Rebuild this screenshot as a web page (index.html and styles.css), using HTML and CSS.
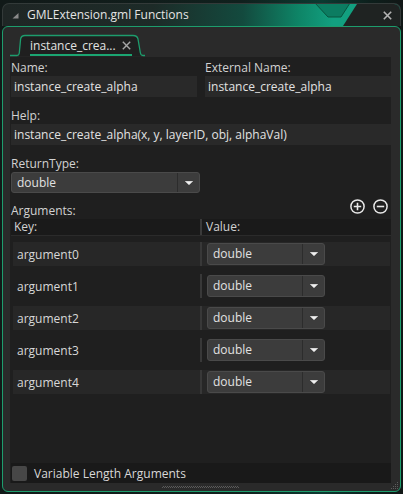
FILE: index.html
```html
<!DOCTYPE html>
<html>
<head>
<meta charset="utf-8">
<link rel="stylesheet" href="styles.css">
</head>
<body>
<div class="window">
  <div class="titlebar">
    <svg class="tb-deco" viewBox="0 0 397 22" width="397" height="22">
      <polygon points="312,-1 347,-1 338,13 325,13" fill="#0c7c61" stroke="#08543f" stroke-width="1"/>
      <polygon points="354,0 397,0 397,22 340,22" fill="#1f2322"/>
    </svg>
    <svg class="collapse" viewBox="0 0 7 6" width="7" height="6"><polygon points="6.5,0 6.5,5.5 0.5,5.5" fill="#8a8a8a"/></svg>
    <span class="title">GMLExtension.gml Functions</span>
    <svg class="close" viewBox="0 0 9 9" width="9" height="9"><path d="M0.8 0.8L8.2 8.2M8.2 0.8L0.8 8.2" stroke="#b4b4b4" stroke-width="1.6"/></svg>
  </div>
  <div class="frame">
    <div class="tabstrip">
      <svg class="tab-outline" viewBox="0 0 381 30" width="381" height="30">
        <path d="M9 29.5 L9.3 26 L10.6 12 C11 9.5 12.5 8.5 15 8.5 H123 C126 8.5 127.5 9.5 128 12 L130.4 26 L130.8 29.5 Z" fill="#1f1f1f"/>
        <path d="M0 28.5 H7 C8.6 28.5 9 27.6 9.3 26 L10.6 12 C11 9.5 12.5 8.5 15 8.5 H123 C126 8.5 127.5 9.5 128 12 L130.4 26 C130.7 27.8 131.4 28.5 133 28.5 H135" fill="none" stroke="#1d9d6d" stroke-width="1.3"/>
      </svg>
      <div class="tab">
        <span class="tab-text">instance_crea...</span>
        <svg class="tab-close" viewBox="0 0 9 9" width="9" height="9"><path d="M0.8 0.8L8.2 8.2M8.2 0.8L0.8 8.2" stroke="#a6a6a6" stroke-width="1.4"/></svg>
      </div>
    </div>
    <div class="panel">
      <div class="row2">
        <div class="field">
          <div class="label">Name:</div>
          <div class="input">instance_create_alpha</div>
        </div>
        <div class="field">
          <div class="label">External Name:</div>
          <div class="input">instance_create_alpha</div>
        </div>
      </div>
      <div class="field help">
        <div class="label">Help:</div>
        <div class="input">instance_create_alpha(x, y, layerID, obj, alphaVal)</div>
      </div>
      <div class="field rtype">
        <div class="label">ReturnType:</div>
        <div class="select rt">
          <div class="sel-val">double</div>
          <div class="sel-btn"><svg viewBox="0 0 8 4" width="8" height="4"><polygon points="0.3,0.3 7.7,0.3 4,3.8" fill="#f0f0f0" stroke="#f0f0f0" stroke-width="0.5" stroke-linejoin="round"/></svg></div>
        </div>
      </div>
      <div class="args-head">
        <span class="label">Arguments:</span>
        <div class="icons">
          <svg viewBox="0 0 15 15" width="15" height="15"><circle cx="7.5" cy="7.5" r="6.6" fill="none" stroke="#e8e8e8" stroke-width="1.5"/><path d="M3.8 7.5H11.2M7.5 3.8V11.2" stroke="#e8e8e8" stroke-width="1.6"/></svg>
          <svg viewBox="0 0 15 15" width="15" height="15"><circle cx="7.5" cy="7.5" r="6.6" fill="none" stroke="#e8e8e8" stroke-width="1.5"/><path d="M3.8 7.5H11.2" stroke="#e8e8e8" stroke-width="1.6"/></svg>
        </div>
      </div>
      <div class="table">
        <div class="thead">
          <div class="th key">Key:</div>
          <div class="th-sep"></div>
          <div class="th val">Value:</div>
        </div>
        <div class="tbody">
          <div class="trow lit">
            <div class="tkey">argument0</div><div class="tsep"></div>
            <div class="tval"><div class="select small"><div class="sel-val">double</div><div class="sel-btn"><svg viewBox="0 0 8 4" width="8" height="4"><polygon points="0.3,0.3 7.7,0.3 4,3.8" fill="#f0f0f0" stroke="#f0f0f0" stroke-width="0.5" stroke-linejoin="round"/></svg></div></div></div>
          </div>
          <div class="trow">
            <div class="tkey">argument1</div><div class="tsep"></div>
            <div class="tval"><div class="select small"><div class="sel-val">double</div><div class="sel-btn"><svg viewBox="0 0 8 4" width="8" height="4"><polygon points="0.3,0.3 7.7,0.3 4,3.8" fill="#f0f0f0" stroke="#f0f0f0" stroke-width="0.5" stroke-linejoin="round"/></svg></div></div></div>
          </div>
          <div class="trow lit">
            <div class="tkey">argument2</div><div class="tsep"></div>
            <div class="tval"><div class="select small"><div class="sel-val">double</div><div class="sel-btn"><svg viewBox="0 0 8 4" width="8" height="4"><polygon points="0.3,0.3 7.7,0.3 4,3.8" fill="#f0f0f0" stroke="#f0f0f0" stroke-width="0.5" stroke-linejoin="round"/></svg></div></div></div>
          </div>
          <div class="trow">
            <div class="tkey">argument3</div><div class="tsep"></div>
            <div class="tval"><div class="select small"><div class="sel-val">double</div><div class="sel-btn"><svg viewBox="0 0 8 4" width="8" height="4"><polygon points="0.3,0.3 7.7,0.3 4,3.8" fill="#f0f0f0" stroke="#f0f0f0" stroke-width="0.5" stroke-linejoin="round"/></svg></div></div></div>
          </div>
          <div class="trow lit">
            <div class="tkey">argument4</div><div class="tsep"></div>
            <div class="tval"><div class="select small"><div class="sel-val">double</div><div class="sel-btn"><svg viewBox="0 0 8 4" width="8" height="4"><polygon points="0.3,0.3 7.7,0.3 4,3.8" fill="#f0f0f0" stroke="#f0f0f0" stroke-width="0.5" stroke-linejoin="round"/></svg></div></div></div>
          </div>
        </div>
      </div>
      <div class="footer">
        <span class="checkbox"></span>
        <span class="footer-text">Variable Length Arguments</span>
      </div>
    </div>
    <div class="strip"><div class="grip"></div></div>
    <svg class="corner-grip" viewBox="0 0 8 8" width="8" height="8">
      <g fill="#5c5c5c">
        <rect x="6" y="0" width="1" height="1"/>
        <rect x="4" y="2" width="1" height="1"/><rect x="6" y="2" width="1" height="1"/>
        <rect x="2" y="4" width="1" height="1"/><rect x="4" y="4" width="1" height="1"/><rect x="6" y="4" width="1" height="1"/>
        <rect x="0" y="6" width="1" height="1"/><rect x="2" y="6" width="1" height="1"/><rect x="4" y="6" width="1" height="1"/><rect x="6" y="6" width="1" height="1"/>
      </g>
    </svg>
  </div>
</div>
</body>
</html>
```

FILE: styles.css
```css
html, body {
  margin: 0;
  padding: 0;
}
body {
  width: 403px;
  height: 494px;
  overflow: hidden;
  background: linear-gradient(90deg, #111918 0%, #10201d 60%, #0b3a31 80%, #0d1f1c 92%, #111716 100%);
  font-family: "Open Sans", "DejaVu Sans", sans-serif;
  font-size: 12px;
  color: #dcdcdc;
}
.window {
  margin: 3px 0 0 2px;
  width: 399px;
}
.titlebar {
  position: relative;
  height: 23px;
  box-sizing: border-box;
  border: 1px solid #333a39;
  border-bottom: 0;
  border-radius: 7px 7px 0 0;
  overflow: hidden;
  background: linear-gradient(90deg, #1f2625 0px, #1d2b28 150px, #134a3e 240px, #0e8466 295px, #12a080 330px);
  display: flex;
  align-items: center;
  padding: 0 8px 0 9px;
}
.tb-deco {
  position: absolute;
  left: 0;
  top: 0;
}
.collapse, .title, .close {
  position: relative;
}
.collapse {
  margin-right: 8px;
  margin-top: 1px;
}
.title {
  color: #e4e4e4;
  line-height: 17px;
  margin-top: -1px;
}
.close {
  margin-left: auto;
}
.frame {
  position: relative;
  height: 466px;
  box-sizing: border-box;
  border: 1px solid #1d9d6d;
  border-radius: 6px;
  background: #2a2a2a;
  padding: 0 9px 0 7px;
}
.tabstrip {
  position: relative;
  height: 30px;
  display: flex;
  align-items: flex-end;
}
.tab-outline {
  position: absolute;
  left: 0;
  top: 0;
}
.tab {
  position: relative;
  margin: 0 0 1px 20px;
  width: 102px;
  height: 20px;
  box-sizing: border-box;
  padding-top: 1px;
  border-bottom: 2px solid #1ba571;
  display: flex;
  align-items: center;
  gap: 6px;
}
.tab-text {
  color: #e2e2e2;
  line-height: 17px;
  white-space: nowrap;
}
.panel {
  height: 426px;
  box-sizing: border-box;
  background: #1f1f1f;
  padding: 2px 0 0 1px;
  display: flex;
  flex-direction: column;
}
.row2 {
  display: flex;
  gap: 8px;
  margin-bottom: 10px;
}
.row2 .field {
  flex: 1;
  min-width: 0;
}
.field.help {
  margin-bottom: 10px;
}
.field.rtype {
  margin-bottom: 9px;
}
.label {
  height: 17px;
  line-height: 17px;
  color: #d2d2d2;
}
.input {
  height: 21px;
  line-height: 21px;
  background: #292929;
  padding-left: 3px;
  color: #e2e2e2;
  white-space: nowrap;
  overflow: hidden;
}
.select {
  display: flex;
  height: 21px;
  box-sizing: border-box;
  border: 1px solid #4a4a4a;
  border-radius: 3px;
  background: #3c3c3c;
  overflow: hidden;
}
.select.rt {
  width: 189px;
}
.select.small {
  width: 118px;
  height: 22px;
}
.sel-val {
  flex: 1;
  padding-left: 5px;
  line-height: 19px;
  color: #e2e2e2;
}
.select.small .sel-val {
  line-height: 20px;
}
.sel-btn {
  width: 21px;
  border-left: 1px solid #2c2c2c;
  display: flex;
  align-items: center;
  justify-content: center;
}
.args-head {
  height: 17px;
  display: flex;
  align-items: flex-start;
  justify-content: space-between;
  flex: none;
}
.icons {
  display: flex;
  gap: 8px;
  margin-top: -3px;
  margin-right: 3px;
}
.table {
  flex: 1;
  display: flex;
  flex-direction: column;
}
.thead {
  height: 17px;
  box-sizing: border-box;
  background: #1a1a1a;
  border-bottom: 1px solid #2b2b2b;
  display: flex;
}
.th {
  line-height: 16px;
  color: #d2d2d2;
}
.th.key {
  width: 189px;
  box-sizing: border-box;
  padding-left: 3px;
}
.th-sep {
  width: 2px;
  background: #3a3a3a;
}
.th.val {
  padding-left: 4px;
}
.tbody {
  flex: 1;
  padding: 6px 1px 0 2px;
  display: flex;
  flex-direction: column;
  gap: 8px;
}
.trow {
  height: 24px;
  display: flex;
  align-items: center;
}
.trow.lit {
  background: #272727;
}
.tkey {
  width: 187px;
  box-sizing: border-box;
  padding-left: 4px;
  color: #d8d8d8;
}
.tsep {
  width: 2px;
  align-self: stretch;
  background: #383838;
}
.tval {
  padding-left: 5px;
}
.footer {
  height: 20px;
  flex: none;
  background: #191919;
  display: flex;
  align-items: center;
}
.checkbox {
  width: 15px;
  height: 15px;
  background: #474747;
  border-radius: 2px;
  margin: 0 7px 0 1px;
}
.footer-text {
  color: #d8d8d8;
  line-height: 17px;
}
.strip {
  height: 8px;
  padding-top: 3px;
  box-sizing: border-box;
}
.grip {
  margin-left: 152px;
  width: 77px;
  height: 2px;
  background-image: conic-gradient(#5a5a5a 25%, transparent 0 50%, #5a5a5a 0 75%, transparent 0);
  background-size: 2px 2px;
}
.corner-grip {
  position: absolute;
  right: 1px;
  bottom: 1px;
}
```
